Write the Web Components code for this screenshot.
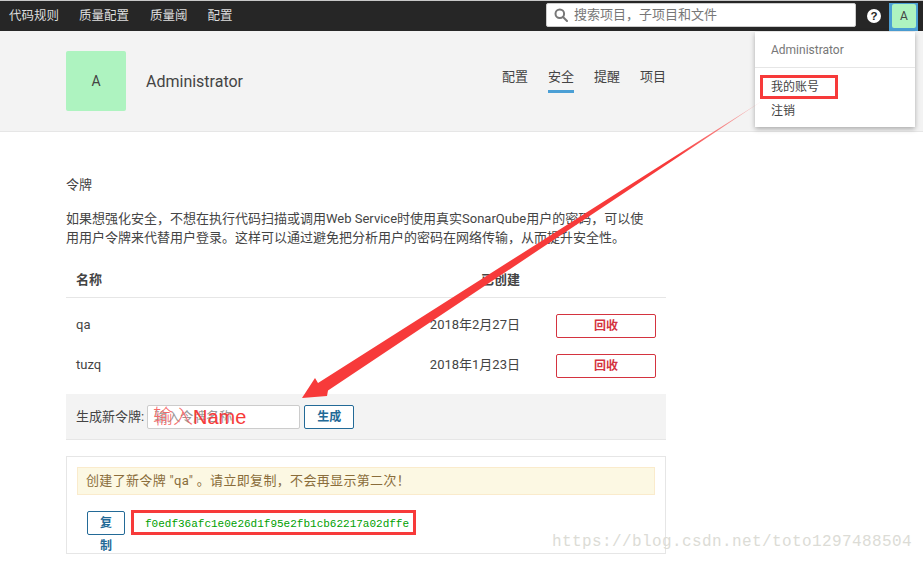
<!DOCTYPE html>
<html lang="zh">
<head>
<meta charset="utf-8">
<title>令牌</title>
<style>
  html, body { margin: 0; height: 100%; overflow: hidden; background: #fff; }
  body { font: 13px/20px Roboto, "Noto Sans CJK SC", sans-serif; color: #444; position: relative; }
</style>
</head>
<body>
<sq-navbar></sq-navbar>
<sq-account-header></sq-account-header>
<sq-tokens></sq-tokens>
<sq-user-menu></sq-user-menu>
<sq-annotations></sq-annotations>

<script>
function define(name, html) {
  customElements.define(name, class extends HTMLElement {
    constructor() {
      super();
      this.attachShadow({ mode: "open" }).innerHTML = html;
    }
  });
}

define("sq-avatar", `
<style>
  :host { display: flex; align-items: center; justify-content: center; background: #aef3c0; border-radius: 2px; color: #444; width: var(--size, 24px); height: var(--size, 24px); flex: none; font-size: var(--fs, 12px); }
</style>
<slot></slot>`);

define("sq-button", `
<style>
  :host { display: inline-block; box-sizing: border-box; height: 24px; line-height: 22px; border: 1px solid #236a97; border-radius: 2px; color: #236a97; text-align: center; font-size: 12px; font-weight: 600; background: #fff; }
  :host([danger]) { border-color: #d4333f; color: #d4333f; }
</style>
<slot></slot>`);

define("sq-navbar", `
<style>
  :host { display: flex; align-items: center; height: 30px; border-top: 1px solid #c8c8c8; background: #262626; color: #ddd; font-size: 12.5px; }
  nav { display: flex; flex: 1; padding-left: 9px; }
  nav span:nth-child(1) { margin-right: 20px; }
  nav span:nth-child(2) { margin-right: 21px; }
  nav span:nth-child(3) { margin-right: 20px; }
  .search { display: flex; align-items: center; gap: 6px; box-sizing: border-box; width: 310px; height: 24px; padding-left: 7px; background: #fff; border: 1px solid #ccc; border-radius: 2px; color: #777; font-size: 13px; margin-top: -2px; }
  .help { display: block; margin: -1px 0 0 11px; }
  .me { display: flex; justify-content: center; box-sizing: border-box; width: 29px; height: 28px; margin: 0 5px 0 8px; padding: 1px 2px 0 3px; background: #4b9fd5; align-self: flex-end; }
  sq-avatar { --size: 24px; }
</style>
<nav><span>代码规则</span><span>质量配置</span><span>质量阈</span><span>配置</span></nav>
<div class="search">
  <svg width="14" height="14" viewBox="0 0 14 14" fill="none" stroke="#777" stroke-width="2"><circle cx="5.8" cy="5.8" r="4.3"/><path d="M9 9l4 4" stroke-linecap="round"/></svg>
  <span>搜索项目，子项目和文件</span>
</div>
<svg class="help" width="14" height="14" viewBox="0 0 14 14"><circle cx="7" cy="7" r="7" fill="#fff"/><text x="7" y="11" text-anchor="middle" font-family="Liberation Sans" font-weight="700" font-size="11.5" fill="#262626">?</text></svg>
<div class="me"><sq-avatar>A</sq-avatar></div>`);

define("sq-account-header", `
<style>
  :host { display: flex; align-items: center; height: 100px; box-sizing: content-box; padding: 0 257px 0 66px; background: #f3f3f3; border-bottom: 1px solid #e6e6e6; }
  sq-avatar { --size: 60px; --fs: 14px; }
  .name { margin: 2px 0 0 20px; font-size: 16px; flex: 1; }
  ul { display: flex; gap: 20px; margin: 2px 0 0; padding: 0; list-style: none; }
  li { height: 30px; box-sizing: border-box; }
  li.on { border-bottom: 3px solid #4b9fd5; height: 26px; }
</style>
<sq-avatar>A</sq-avatar>
<div class="name">Administrator</div>
<ul><li>配置</li><li class="on">安全</li><li>提醒</li><li>项目</li></ul>`);

define("sq-token-row", `
<style>
  :host { display: grid; grid-template-columns: 1fr auto 100px; align-items: center; column-gap: 36px; height: 40px; padding: 0 10px; }
  sq-button { width: 100px; position: relative; top: 1px; }
</style>
<span class="name"><slot name="name"></slot></span>
<span class="when"><slot name="when"></slot></span>
<sq-button danger>回收</sq-button>`);

define("sq-new-token", `
<style>
  :host { display: block; box-sizing: border-box; height: 98px; border: 1px solid #e6e6e6; padding: 10px; position: relative; }
  .warn { height: 28px; box-sizing: border-box; background: #fcf8e3; border: 1px solid #faebcc; color: #8a6d3b; line-height: 26px; padding-left: 8px; letter-spacing: .33px; }
  .row { display: flex; align-items: flex-start; margin: 16px 0 0 10px; }
  sq-button { width: 38px; height: 24px; flex: none; line-height: 22px; }
  .code { font: 11px/26px "Liberation Mono", monospace; color: #00a000; margin-left: 20px; }
  .wrap { width: 38px; height: 43px; overflow: hidden; flex: none; }
  .c { display: block; width: 38px; text-align: center; color: #236a97; font-size: 12px; font-weight: 600; line-height: 22px; }
</style>
<div class="warn">创建了新令牌 "qa" 。请立即复制，不会再显示第二次！</div>
<div class="row">
  <div class="wrap"><sq-button>复</sq-button><span class="c">制</span></div>
  <code class="code">f0edf36afc1e0e26d1f95e2fb1cb62217a02dffe</code>
</div>`);

define("sq-tokens", `
<style>
  :host { display: block; width: 600px; margin: 43px 0 0 66px; }
  h2 { margin: 0; font-size: 13px; font-weight: 400; line-height: 20px; }
  p { margin: 14px 0 0; width: 590px; line-height: 19px; }
  .head { display: grid; grid-template-columns: 1fr auto 100px; column-gap: 36px; height: 38px; padding: 0 10px; margin-top: 12px; border-bottom: 1px solid #e6e6e6; font-weight: 600; line-height: 42px; box-sizing: content-box; }
  .rows { padding-top: 7px; }
  .gen { display: flex; align-items: center; box-sizing: border-box; height: 46px; padding: 0 10px; margin-top: 9px; background: #f3f3f3; border-bottom: 1px solid #e6e6e6; }
  .input { box-sizing: border-box; width: 153px; height: 24px; margin-left: 3px; background: #fff; border: 1px solid #ccc; border-radius: 2px; color: #999; line-height: 22px; padding-left: 6px; overflow: hidden; white-space: nowrap; }
  .gen sq-button { width: 50px; margin-left: 4px; }
  sq-new-token { margin-top: 16px; }
</style>
<h2>令牌</h2>
<p>如果想强化安全，不想在执行代码扫描或调用Web Service时使用真实SonarQube用户的密码，可以使用用户令牌来代替用户登录。这样可以通过避免把分析用户的密码在网络传输，从而提升安全性。</p>
<div class="head"><span>名称</span><span>已创建</span><span></span></div>
<div class="rows">
  <sq-token-row><span slot="name">qa</span><span slot="when">2018年2月27日</span></sq-token-row>
  <sq-token-row><span slot="name">tuzq</span><span slot="when">2018年1月23日</span></sq-token-row>
</div>
<div class="gen">
  <span>生成新令牌:</span>
  <div class="input">输入令牌名称</div>
  <sq-button>生成</sq-button>
</div>
<sq-new-token></sq-new-token>`);

define("sq-user-menu", `
<style>
  :host { position: absolute; left: 755px; top: 32px; width: 160px; height: 95px; background: #fff; box-shadow: 0 2px 5px rgba(0,0,0,.3); font-size: 12px; }
  .who { height: 35px; line-height: 37px; padding-left: 16px; color: #777; border-bottom: 1px solid #e6e6e6; }
  div.item { padding-left: 16px; height: 24px; line-height: 24px; color: #444; }
  .first { margin-top: 7px; }
</style>
<div class="who">Administrator</div>
<div class="item first">我的账号</div>
<div class="item">注销</div>`);

define("sq-annotations", `
<style>
  :host { position: absolute; inset: 0; pointer-events: none; display: block; }
  svg { position: absolute; left: 0; top: 0; }
  .box { position: absolute; box-sizing: border-box; border: 3px solid #f73a3a; }
  .label { position: absolute; left: 153px; top: 405px; font: 20px/24px "Liberation Sans", "Noto Sans CJK SC", sans-serif; color: #f73a3a; white-space: nowrap; }
  .label i { font-style: normal; font-weight: 300; color: #f56a6a; }
  .mark { position: absolute; left: 552px; top: 532px; font: 16px/20px "Liberation Mono", monospace; color: #dcdcd6; letter-spacing: .4px; white-space: nowrap; }
</style>
<svg width="923" height="562">
  <defs><linearGradient id="fade" gradientUnits="userSpaceOnUse" x1="762" y1="101" x2="680" y2="160"><stop offset="0" stop-color="#f73a3a" stop-opacity=".25"/><stop offset="1" stop-color="#f73a3a"/></linearGradient></defs>
  <polygon fill="url(#fade)" stroke="none" points="762,101 328,390.5 327,396 302,398 315,378 318,383"/>
</svg>
<div class="box" style="left:760px;top:75px;width:78px;height:24px"></div>
<div class="box" style="left:131px;top:510px;width:285px;height:25px"></div>
<div class="label"><i>输入</i>Name</div>
<div class="mark">https://blog.csdn.net/toto1297488504</div>`);
</script>
</body>
</html>
